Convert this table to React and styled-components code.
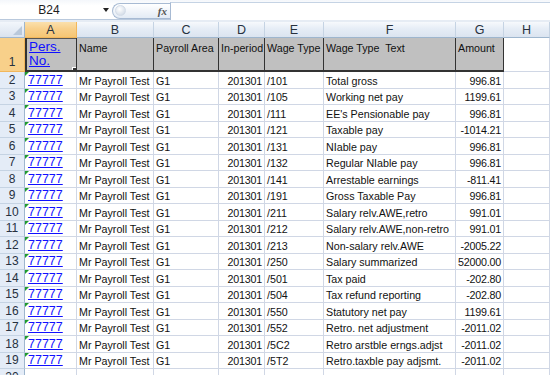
import React from 'react'
import styled, { createGlobalStyle } from 'styled-components'

const GlobalStyle = createGlobalStyle`
    html, body {
        margin: 0;
        padding: 0;
        background: #ffffff;
    }
    body {
        font-family: "Liberation Sans", Arial, sans-serif;
    }
`

const columns = ['A', 'B', 'C', 'D', 'E', 'F', 'G', 'H']

const headings = ['Name', 'Payroll Area', 'In-period', 'Wage Type', 'Wage Type  Text', 'Amount']

const rows = [
    ['/101', 'Total gross', '996.81'],
    ['/105', 'Working net pay', '1199.61'],
    ['/111', "EE's Pensionable pay", '996.81'],
    ['/121', 'Taxable pay', '-1014.21'],
    ['/131', 'NIable pay', '996.81'],
    ['/132', 'Regular NIable pay', '996.81'],
    ['/141', 'Arrestable earnings', '-811.41'],
    ['/191', 'Gross Taxable Pay', '996.81'],
    ['/211', 'Salary relv.AWE,retro', '991.01'],
    ['/212', 'Salary relv.AWE,non-retro', '991.01'],
    ['/213', 'Non-salary relv.AWE', '-2005.22'],
    ['/250', 'Salary summarized', '52000.00'],
    ['/501', 'Tax paid', '-202.80'],
    ['/504', 'Tax refund reporting', '-202.80'],
    ['/550', 'Statutory net pay', '1199.61'],
    ['/552', 'Retro. net adjustment', '-2011.02'],
    ['/5C2', 'Retro arstble erngs.adjst', '-2011.02'],
    ['/5T2', 'Retro.taxble pay adjsmt.', '-2011.02'],
]

const App = () => {
    return (
        <Window>
            <GlobalStyle />
            <FormulaBar>
                <NameBox>
                    <span>B24</span>
                    <DropArrow />
                </NameBox>
                <Splitter>
                    <Knob />
                    <FxLabel>fx</FxLabel>
                </Splitter>
                <FormulaInput />
            </FormulaBar>
            <BarGap />
            <Sheet>
                <Corner>
                    <CornerMark />
                </Corner>
                {columns.map((c, i) => (
                    <ColHeader key={c} $selected={i === 0}>{c}</ColHeader>
                ))}

                <RowHeader $selected $tall>1</RowHeader>
                <TitleCell $selected>
                    <LinkText $size="13.5px">Pers.<br />No.</LinkText>
                    <FillHandle />
                </TitleCell>
                {headings.map((h) => (
                    <TitleCell key={h}>{h}</TitleCell>
                ))}
                <Cell />

                {rows.map((r, i) => (
                    <React.Fragment key={i}>
                        <RowHeader>{i + 2}</RowHeader>
                        <Cell $flag>
                            <LinkText $size="12.5px">77777</LinkText>
                        </Cell>
                        <Cell>Mr Payroll Test</Cell>
                        <Cell>G1</Cell>
                        <Cell $align="right">201301</Cell>
                        <Cell>{r[0]}</Cell>
                        <Cell>{r[1]}</Cell>
                        <Cell $align="right">{r[2]}</Cell>
                        <Cell />
                    </React.Fragment>
                ))}

                <RowHeader>20</RowHeader>
                {columns.map((c) => (
                    <Cell key={'20' + c} />
                ))}
            </Sheet>
        </Window>
    )
}

const Window = styled.div`
    width: 550px;
    height: 375px;
    overflow: hidden;
    background: #ffffff;
`

const FormulaBar = styled.div`
    display: flex;
    align-items: center;
    height: 19px;
    border-bottom: 1px solid #b9c9dd;
    background: linear-gradient(#f4f7fb, #ffffff 30%);
`

const NameBox = styled.div`
    position: relative;
    width: 112px;
    height: 19px;
    display: flex;
    align-items: center;
    justify-content: center;
    padding-right: 14px;
    box-sizing: border-box;
    font-size: 12px;
    color: #1e1e1e;
`

const DropArrow = styled.span`
    position: absolute;
    right: 3px;
    top: 8px;
    width: 0;
    height: 0;
    border-left: 3px solid transparent;
    border-right: 3px solid transparent;
    border-top: 4px solid #222;
`

const Splitter = styled.div`
    display: flex;
    align-items: center;
    justify-content: space-between;
    width: 58px;
    height: 16px;
    margin-top: 2px;
    box-sizing: border-box;
    padding: 0 3px 0 2px;
    border: 1px solid #a7bad3;
    border-right: none;
    border-radius: 9px 0 0 9px;
    background: linear-gradient(#ffffff, #e3ebf5);
`

const Knob = styled.span`
    width: 9px;
    height: 9px;
    border-radius: 50%;
    background: radial-gradient(circle at 40% 35%, #ffffff, #c9d4e2);
    border: 1px solid #d3dce8;
`

const FxLabel = styled.span`
    font-family: "Liberation Serif", "Times New Roman", serif;
    font-style: italic;
    font-weight: bold;
    font-size: 11px;
    color: #555;
`

const FormulaInput = styled.div`
    flex: 1;
    height: 17px;
    margin-top: 2px;
    border-left: 1px solid #a7bad3;
    border-top: 1px solid #c5d3e4;
    background: #ffffff;
`

const BarGap = styled.div`
    height: 2px;
    background: #e6ecf4;
`

const Sheet = styled.div`
    display: grid;
    grid-template-columns: 25px 52px 77px 65px 46px 59px 132px 48px 46px;
    grid-template-rows: 16px 34px repeat(19, 16.5px);
    font-size: 10.7px;
    color: #111;
`

const Corner = styled.div`
    position: relative;
    box-sizing: border-box;
    border-right: 1px solid #9eb6ce;
    border-bottom: 1px solid #9eb6ce;
    background: linear-gradient(#f2f6fb, #dae3ef);
`

const CornerMark = styled.span`
    position: absolute;
    right: 2px;
    bottom: 2px;
    width: 0;
    height: 0;
    border-left: 9px solid transparent;
    border-bottom: 9px solid #b9c8da;
`

const ColHeader = styled.div`
    display: flex;
    align-items: center;
    justify-content: center;
    box-sizing: border-box;
    border-right: 1px solid ${(p) => (p.$selected ? '#f2b75b' : '#c5d3e3')};
    border-bottom: 1px solid ${(p) => (p.$selected ? '#f2b75b' : '#9eb6ce')};
    background: ${(p) =>
        p.$selected
            ? 'linear-gradient(#fbe0ad, #f8d08c 45%, #f6c674)'
            : 'linear-gradient(#f7f9fc, #e6edf6 45%, #dbe4f0)'};
    font-size: 12.5px;
    color: #27313f;
`

const RowHeader = styled.div`
    display: flex;
    align-items: ${(p) => (p.$tall ? 'flex-end' : 'center')};
    justify-content: center;
    box-sizing: border-box;
    padding-bottom: ${(p) => (p.$tall ? '2px' : '0')};
    border-right: 1px solid ${(p) => (p.$selected ? '#f2b75b' : '#9eb6ce')};
    border-bottom: 1px solid ${(p) => (p.$selected ? '#f2b75b' : '#c5d3e3')};
    background: ${(p) => (p.$selected ? '#f8d08a' : '#e4ecf7')};
    font-size: 12px;
    color: #27313f;
`

const TitleCell = styled.div`
    position: relative;
    box-sizing: border-box;
    padding: ${(p) => (p.$selected ? '2px 2px 0 4px' : '4px 2px 0 2px')};
    background: #c0c0c0;
    border-right: 1px solid #333;
    border-bottom: 2px solid #333;
    box-shadow: ${(p) => (p.$selected ? 'inset 2px 0 0 #333, inset 0 1px 0 #555' : 'none')};
    line-height: 13px;
    white-space: pre;
    overflow: hidden;
`

const FillHandle = styled.span`
    position: absolute;
    right: -3px;
    bottom: -4px;
    width: 5px;
    height: 5px;
    background: #333;
    border: 1px solid #fff;
    z-index: 2;
`

const LinkText = styled.span`
    display: inline-block;
    font-size: ${(p) => p.$size};
    line-height: 14px;
    color: #1010ff;
    text-decoration: underline;
`

const Cell = styled.div`
    position: relative;
    display: flex;
    align-items: flex-end;
    justify-content: ${(p) => (p.$align === 'right' ? 'flex-end' : 'flex-start')};
    box-sizing: border-box;
    padding: ${(p) => (p.$align === 'right' ? '0 2px 1px 0' : '0 2px 1px 2px')};
    letter-spacing: ${(p) => (p.$align === 'right' ? '-0.2px' : 'normal')};
    border-right: 1px solid #d0d7e5;
    border-bottom: 1px solid #d0d7e5;
    white-space: nowrap;
    overflow: hidden;

    ${(p) =>
        p.$flag &&
        `
        padding-left: 3px;
        &::before {
            content: '';
            position: absolute;
            left: 0;
            top: 0;
            width: 0;
            height: 0;
            border-top: 4px solid #1f9a2f;
            border-right: 4px solid transparent;
        }
    `}
`

export default App
